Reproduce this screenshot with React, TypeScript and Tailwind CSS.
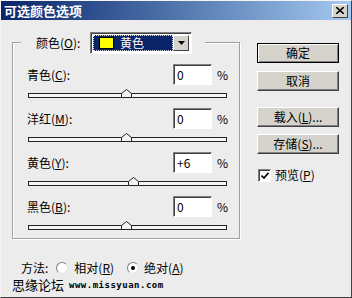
import React from 'react'

// thumb offsets measured from the left end of the track
const rows = [
  { label: '青色', key: 'C', value: '0', pos: 93 },
  { label: '洋红', key: 'M', value: '0', pos: 93 },
  { label: '黄色', key: 'Y', value: '+6', pos: 100 },
  { label: '黑色', key: 'B', value: '0', pos: 93 },
]

function Thumb() {
  return (
    <svg width="11" height="9" viewBox="0 0 11 9">
      <path d="M0.5 8.5 V4.5 L5.5 0.5 L10.5 4.5 V8.5 Z" fill="#f4f4f4" stroke="#222" />
    </svg>
  )
}

function Btn({ children, main }: { children: React.ReactNode; main?: boolean }) {
  return (
    <div
      className={
        'w-[82px] h-[20px] flex items-center justify-center bg-[#d6d3cc] ' +
        (main
          ? 'border border-black shadow-[inset_1px_1px_0_#fff,inset_-1px_-1px_0_#808080]'
          : 'border border-t-white border-l-white border-b-[#404040] border-r-[#404040] shadow-[inset_-1px_-1px_0_#808080]')
      }
    >
      {children}
    </div>
  )
}

function Radio({ on }: { on?: boolean }) {
  return (
    <div className="w-[12px] h-[12px] rounded-full bg-white border border-[#808080] border-b-[#e0e0e0] border-r-[#e0e0e0] flex items-center justify-center">
      {on && <div className="w-[4px] h-[4px] rounded-full bg-black" />}
    </div>
  )
}

export default function App() {
  return (
    <div className="w-[352px] h-[298px] bg-[#ececec] border border-t-[#f4f4f4] border-l-[#f4f4f4] border-r-[#404040] border-b-[#404040] text-[12px] leading-[14px] text-black font-['Noto_Sans_CJK_SC',sans-serif] overflow-hidden">
      <div className="h-[19px] flex items-center justify-between bg-gradient-to-r from-[#0a246a] to-[#a6caf0] pl-[3px] pr-[3px]">
        <span className="text-white font-bold text-[13px] leading-[15px]">可选颜色选项</span>
        <div className="w-[16px] h-[14px] bg-[#d6d3cc] border border-t-white border-l-white border-b-[#404040] border-r-[#404040] flex items-center justify-center">
          <svg width="8" height="7" viewBox="0 0 8 7">
            <path d="M0 0 L8 7 M8 0 L0 7" stroke="#000" strokeWidth="1.6" />
          </svg>
        </div>
      </div>

      <div className="flex">
        <div className="flex flex-col">
          <div className="ml-[11px] mt-[22px] w-[228px] h-[197px] border border-[#a0a0a0] shadow-[inset_1px_1px_0_#fff,1px_1px_0_#fff]">
            <div className="-mt-[11px] ml-[8px] w-[184px] h-[22px] flex items-center bg-[#ececec] pl-[15px]">
              <span className="w-[54px]">
                颜色(<u>O</u>):
              </span>
              <div className="w-[102px] h-[22px] bg-white border border-[#808080] border-b-white border-r-white shadow-[inset_1px_1px_0_#404040] flex items-center p-[2px]">
                <div className="flex-1 h-full bg-[#0a246a] border border-dotted border-[#e0e0e0] flex items-center pl-[5px]">
                  <div className="w-[15px] h-[12px] bg-[#ffff00] border border-black" />
                  <span className="ml-[6px] text-white">黄色</span>
                </div>
                <div className="w-[16px] h-full bg-[#d6d3cc] border border-t-white border-l-white border-b-[#404040] border-r-[#404040] flex items-center justify-center">
                  <svg width="7" height="4" viewBox="0 0 7 4">
                    <path d="M0 0 H7 L3.5 4 Z" fill="#000" />
                  </svg>
                </div>
              </div>
            </div>

            <div className="flex flex-col pl-[14px] mt-[10px] gap-[10px]">
              {rows.map((r) => (
                <div key={r.key} className="flex flex-col">
                  <div className="flex items-center h-[21px]">
                    <span className="w-[146px]">
                      {r.label}(<u>{r.key}</u>):
                    </span>
                    <div className="w-[39px] h-[21px] bg-white border border-[#808080] border-b-white border-r-white shadow-[inset_1px_1px_0_#404040] flex items-center pl-[3px]">
                      {r.value}
                    </div>
                    <span className="ml-[5px]">%</span>
                  </div>
                  <div className="relative w-[199px] h-[13px] ml-[1px]">
                    <div className="absolute left-0 right-0 top-[8px] h-[5px] bg-[#f6f6f6] border border-[#222]" />
                    <div className="absolute top-[4px]" style={{ left: r.pos + 'px' }}>
                      <Thumb />
                    </div>
                  </div>
                </div>
              ))}
            </div>
          </div>

          <div className="mt-[22px] ml-[20px] flex items-center h-[14px]">
            <span>方法:</span>
            <div className="ml-[8px]"><Radio /></div>
            <span className="ml-[6px]">
              相对(<u>R</u>)
            </span>
            <div className="ml-[13px]"><Radio on /></div>
            <span className="ml-[5px]">
              绝对(<u>A</u>)
            </span>
          </div>
          <div className="mt-[2px] ml-[11px] flex items-center h-[16px]">
            <span className="text-[13px] leading-[16px]">思缘论坛</span>
            <span className="ml-[5px] text-[9px] font-bold tracking-[0.5px] font-['DejaVu_Sans_Mono',monospace]">
              www.missyuan.com
            </span>
          </div>
        </div>

        <div className="ml-[17px] mt-[23px] flex flex-col">
          <Btn main>确定</Btn>
          <div className="mt-[8px]"><Btn>取消</Btn></div>
          <div className="mt-[16px]"><Btn>载入(<u>L</u>)...</Btn></div>
          <div className="mt-[7px]"><Btn>存储(<u>S</u>)...</Btn></div>
          <div className="mt-[14px] flex items-center ml-[1px]">
            <div className="w-[13px] h-[13px] bg-white border border-[#808080] border-b-white border-r-white shadow-[inset_1px_1px_0_#404040] flex items-center justify-center">
              <svg width="8" height="7" viewBox="0 0 8 7">
                <path d="M0.5 3.5 L3 6 L7.5 0.8" stroke="#000" strokeWidth="1.6" fill="none" />
              </svg>
            </div>
            <span className="ml-[4px]">
              预览(<u>P</u>)
            </span>
          </div>
        </div>
      </div>
    </div>
  )
}
